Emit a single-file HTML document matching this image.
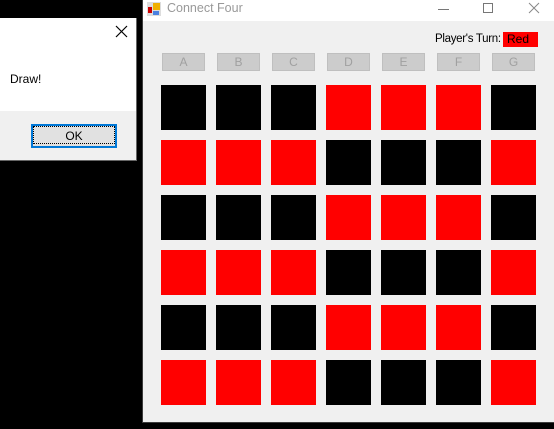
<!DOCTYPE html>
<html><head><style>
*{margin:0;padding:0;box-sizing:border-box}
body{width:554px;height:429px;background:#000;position:relative;overflow:hidden;font-family:"Liberation Sans",sans-serif;font-size:12px}
.abs{position:absolute}
.win{left:142px;top:0;width:412px;height:423px;background:#f0f0f0;border-left:1px solid #3c3c3c;border-bottom:1px solid #3c3c3c}
.tb{left:143px;top:0;width:411px;height:21px;background:#fff}
.btn{position:absolute;top:53px;width:43px;height:18px;background:#cccccc;border:1px solid #bfbfbf;color:#a0a0a0;text-align:center;font-size:12px;line-height:16px}
.c{position:absolute;width:45px;height:45px}
.r{background:#f00}.k{background:#000}
</style></head><body>
<div class="abs win"></div>
<div class="abs tb"></div>
<svg class="abs" style="left:147px;top:2px" width="14" height="14"><rect x="0" y="0" width="14" height="14" fill="#ddd"/><rect x="6" y="1" width="7" height="7" fill="#f0b000"/><rect x="1" y="5" width="4" height="6" fill="#c00"/><rect x="6" y="9" width="6" height="4" fill="#4a80e0"/></svg>
<div class="abs" style="left:167px;top:1px;color:#999;font-size:12.5px">Connect Four</div>
<div class="abs" style="left:438px;top:9px;width:11px;height:1px;background:#777"></div>
<div class="abs" style="left:483px;top:3px;width:10px;height:10px;border:1px solid #777"></div>
<svg class="abs" style="left:528px;top:2px" width="12" height="12"><path d="M1 1L11 11M11 1L1 11" stroke="#888" stroke-width="1"/></svg>
<div class="abs" style="left:435px;top:33px;font-size:11.5px;letter-spacing:-0.3px;color:#000;white-space:nowrap">Player's Turn:</div>
<div class="abs" style="left:503px;top:32px;width:35px;height:15px;background:#f00;padding-left:4px;line-height:15px">Red</div>
<div class="btn" style="left:162px">A</div><div class="btn" style="left:217px">B</div><div class="btn" style="left:272px">C</div><div class="btn" style="left:327px">D</div><div class="btn" style="left:382px">E</div><div class="btn" style="left:437px">F</div><div class="btn" style="left:492px">G</div>
<div class="abs" style="left:0;top:18px;width:137px;height:143px;background:#fff;border-right:1px solid #666;border-bottom:1px solid #666"></div>
<div class="abs" style="left:0;top:111px;width:136px;height:49px;background:#f0f0f0"></div>
<svg class="abs" style="left:115px;top:25px" width="13" height="13"><path d="M1 1L12 12M12 1L1 12" stroke="#000" stroke-width="1.2"/></svg>
<div class="abs" style="left:10px;top:72px;font-size:12px">Draw!</div>
<div class="abs" style="left:31px;top:124px;width:86px;height:24px;border:2px solid #0078d7;background:#e1e1e1;text-align:center;line-height:18px;font-size:12px"><div style="border:1px dotted #000;height:18px">OK</div></div>
<div class="c k" style="left:161px;top:85px"></div><div class="c k" style="left:216px;top:85px"></div><div class="c k" style="left:271px;top:85px"></div><div class="c r" style="left:326px;top:85px"></div><div class="c r" style="left:381px;top:85px"></div><div class="c r" style="left:436px;top:85px"></div><div class="c k" style="left:491px;top:85px"></div>
<div class="c r" style="left:161px;top:140px"></div><div class="c r" style="left:216px;top:140px"></div><div class="c r" style="left:271px;top:140px"></div><div class="c k" style="left:326px;top:140px"></div><div class="c k" style="left:381px;top:140px"></div><div class="c k" style="left:436px;top:140px"></div><div class="c r" style="left:491px;top:140px"></div>
<div class="c k" style="left:161px;top:195px"></div><div class="c k" style="left:216px;top:195px"></div><div class="c k" style="left:271px;top:195px"></div><div class="c r" style="left:326px;top:195px"></div><div class="c r" style="left:381px;top:195px"></div><div class="c r" style="left:436px;top:195px"></div><div class="c k" style="left:491px;top:195px"></div>
<div class="c r" style="left:161px;top:250px"></div><div class="c r" style="left:216px;top:250px"></div><div class="c r" style="left:271px;top:250px"></div><div class="c k" style="left:326px;top:250px"></div><div class="c k" style="left:381px;top:250px"></div><div class="c k" style="left:436px;top:250px"></div><div class="c r" style="left:491px;top:250px"></div>
<div class="c k" style="left:161px;top:305px"></div><div class="c k" style="left:216px;top:305px"></div><div class="c k" style="left:271px;top:305px"></div><div class="c r" style="left:326px;top:305px"></div><div class="c r" style="left:381px;top:305px"></div><div class="c r" style="left:436px;top:305px"></div><div class="c k" style="left:491px;top:305px"></div>
<div class="c r" style="left:161px;top:360px"></div><div class="c r" style="left:216px;top:360px"></div><div class="c r" style="left:271px;top:360px"></div><div class="c k" style="left:326px;top:360px"></div><div class="c k" style="left:381px;top:360px"></div><div class="c k" style="left:436px;top:360px"></div><div class="c r" style="left:491px;top:360px"></div>
</body></html>
